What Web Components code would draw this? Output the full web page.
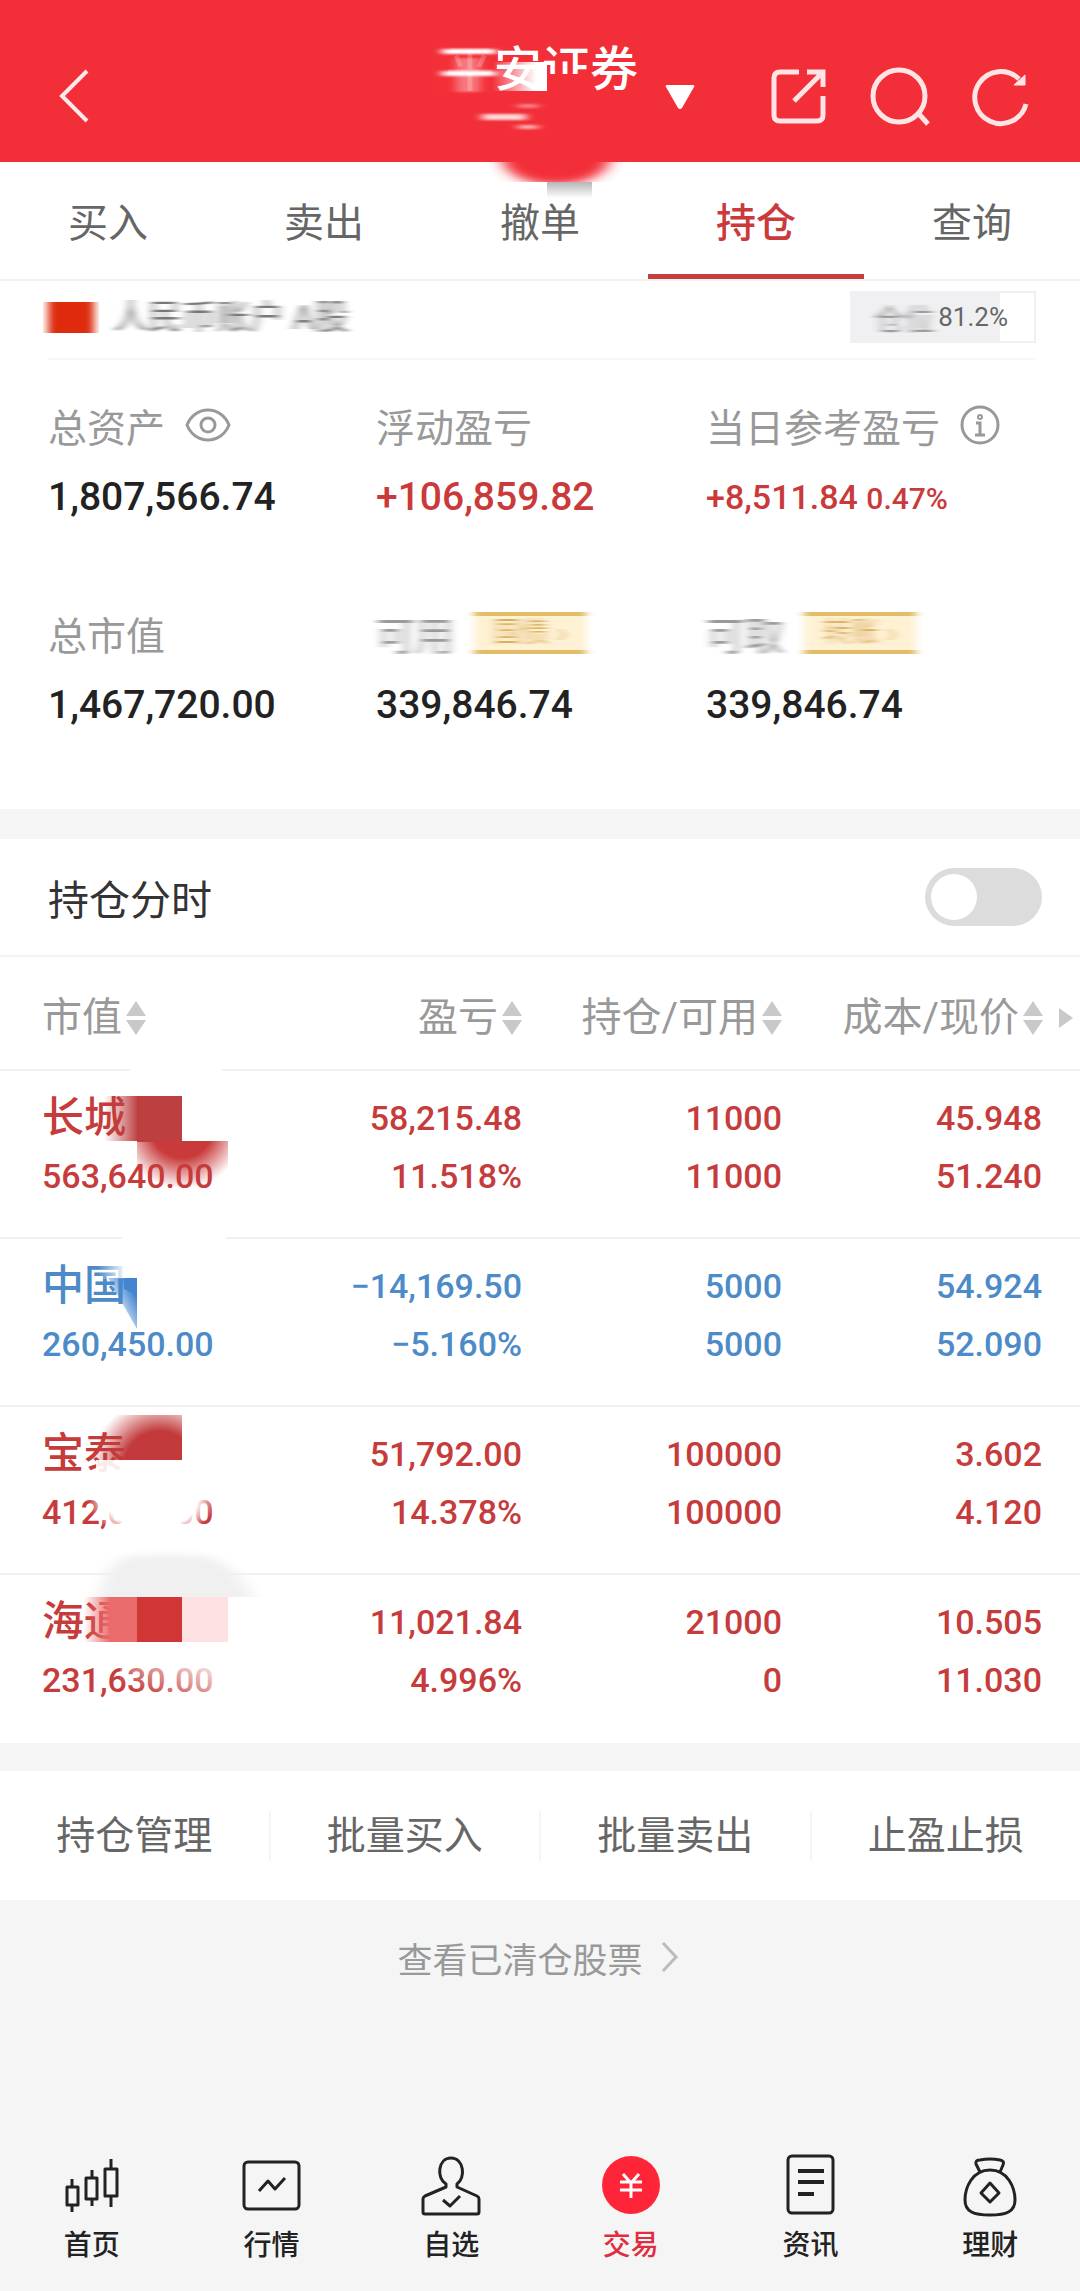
<!DOCTYPE html>
<html lang="zh-CN">
<head>
  <meta charset="UTF-8">
  <meta name="viewport" content="width=device-width, initial-scale=1.0">
  <title>持仓</title>
  <style>
    body {
      margin: 0;
      background: #f5f5f5;
      color: #222;
      font-family: Roboto, "Noto Sans CJK SC", sans-serif;
    }
  </style>
</head>
<body>
  <trade-app></trade-app>

  <script>
    class TradeHeader extends HTMLElement {
      connectedCallback() {
        this.attachShadow({ mode: 'open' });
        this.shadowRoot.innerHTML = `
          <style>
            :host {
              display: block;
              position: relative;
              z-index: 1;
              background: #f22f38;
              color: white;
            }
            header {
              height: 162px;
              display: grid;
              grid-template-columns: 1fr auto 1fr;
              padding: 0 48px 0 52px;
            }
            button {
              border: 0;
              padding: 0;
              background: none;
              color: inherit;
              display: block;
            }
            svg { display: block; }
            .back { justify-self: start; padding-top: 32px; }
            h1 {
              margin: 0;
              padding-top: 38px;
              font-size: 48px;
              line-height: 64px;
              font-weight: 500;
            }
            .right {
              display: flex;
              align-items: center;
              padding: 32px 0 0 26px;
            }
            .icons {
              display: flex;
              gap: 42px;
              margin-left: auto;
            }
            .smear {
              position: absolute;
              left: calc(50% - 120px);
              top: 0;
              overflow: visible;
              pointer-events: none;
            }
          </style>
          <header>
            <button class="back" aria-label="返回">
              <svg width="44" height="130" viewBox="0 0 44 130" fill="none" stroke="#ffe9ea" stroke-width="4">
                <path d="M35 39 L10 64 L35 89"/>
              </svg>
            </button>
            <h1>平安证券</h1>
            <div class="right">
              <button aria-label="切换账户">
                <svg width="32" height="26" viewBox="0 0 32 26"><path d="M3 1H29Q31 1 30 3L18 24Q16 26 14 24L2 3Q1 1 3 1Z" fill="#fff"/></svg>
              </button>
              <div class="icons">
                <button aria-label="分享">
                  <svg width="60" height="60" viewBox="0 0 60 60" fill="none" stroke="#ffe4e5" stroke-width="5">
                    <path d="M31 5H12Q6 5 6 11V48Q6 54 12 54H49Q55 54 55 48V29"/>
                    <path d="M39 5H55V20M54 6L26 34"/>
                  </svg>
                </button>
                <button aria-label="搜索">
                  <svg width="60" height="60" viewBox="0 0 60 60" fill="none" stroke="#ffe4e5" stroke-width="5">
                    <circle cx="29" cy="29" r="26"/>
                    <path d="M48 46L58 57"/>
                  </svg>
                </button>
                <button aria-label="刷新">
                  <svg width="60" height="60" viewBox="0 0 60 60" fill="none" stroke="#ffe4e5" stroke-width="5">
                    <path d="M54 37A26 26 0 1 1 47 12"/>
                    <path d="M53 8V18H42Z" fill="#ffe4e5" stroke-width="1"/>
                  </svg>
                </button>
              </div>
            </div>
          </header>
          <svg class="smear" width="240" height="200" viewBox="0 0 240 200">
            <defs>
              <filter id="soft" x="-20%" y="-50%" width="140%" height="200%"><feGaussianBlur stdDeviation="5 1"/></filter>
              <filter id="round" x="-20%" y="-50%" width="140%" height="200%"><feGaussianBlur stdDeviation="8 4"/></filter>
              <linearGradient id="fade"><stop offset="0" stop-color="#fff" stop-opacity="0"/><stop offset="0.8" stop-color="#fff"/></linearGradient>
              <linearGradient id="grey" x1="0" y1="0" x2="0" y2="1"><stop offset="0" stop-color="#b5b5b5"/><stop offset="1" stop-color="#fff"/></linearGradient>
              <clipPath id="edge"><rect x="40" y="158" width="200" height="24"/></clipPath>
            </defs>
            <rect x="18" y="44" width="54" height="50" fill="#f22f38" opacity="0.8"/>
            <g fill="#fff" filter="url(#soft)">
              <rect x="22" y="49" width="54" height="5"/>
              <rect x="22" y="71" width="54" height="5"/>
              <rect x="36" y="58" width="24" height="34" opacity="0.35"/>
              <rect x="62" y="114" width="44" height="6" opacity="0.8"/>
              <rect x="98" y="104" width="20" height="4" opacity="0.4"/>
              <rect x="98" y="125" width="20" height="4" opacity="0.6"/>
            </g>
            <rect x="72" y="62" width="55" height="29" fill="url(#fade)"/>
            <rect x="127" y="74" width="45" height="26" fill="#f22f38"/>
            <rect x="76" y="91" width="150" height="10" fill="#f22f38"/>
            <g clip-path="url(#edge)"><ellipse cx="136" cy="158" rx="54" ry="27" fill="#f22f38" filter="url(#round)"/></g>
            <rect x="127" y="182" width="45" height="16" fill="url(#grey)"/>
          </svg>
        `;
      }
    }

    class TradeTabs extends HTMLElement {
      connectedCallback() {
        this.attachShadow({ mode: 'open' });
        this.shadowRoot.innerHTML = `
          <style>
            :host {
              display: block;
              background: white;
              border-bottom: 2px solid #f2f2f2;
            }
            nav { display: flex; }
            a {
              flex: 1;
              text-align: center;
              padding-top: 12px;
              font-size: 40px;
              line-height: 100px;
              color: #666;
              text-decoration: none;
              border-bottom: 5px solid transparent;
            }
            a.active {
              color: #ca3a3b;
              border-color: #c43e40;
              font-weight: 500;
            }
          </style>
          <nav>
            <a href="#buy">买入</a>
            <a href="#sell">卖出</a>
            <a href="#cancel">撤单</a>
            <a href="#hold" class="active">持仓</a>
            <a href="#query">查询</a>
          </nav>
        `;
      }
    }

    class AccountSummary extends HTMLElement {
      connectedCallback() {
        this.attachShadow({ mode: 'open' });
        this.shadowRoot.innerHTML = `
          <style>
            :host {
              display: block;
              background: white;
              padding: 4px 44px 66px 48px;
            }
            .defs { position: absolute; }
            .smudge { filter: url(#smudge); }
            .account {
              display: flex;
              align-items: center;
              height: 64px;
              padding-bottom: 9px;
              border-bottom: 2px solid #f7f7f7;
            }
            .flag {
              width: 46px;
              height: 31px;
              background: #de2910;
            }
            .name {
              margin-left: 20px;
              font-size: 34px;
              line-height: 40px;
              color: #777;
            }
            .ratio {
              margin-left: auto;
              display: flex;
              align-items: center;
              gap: 4px;
              box-sizing: border-box;
              height: 52px;
              padding: 0 26px 0 22px;
              font-size: 26px;
              color: #666;
              background: linear-gradient(to left, #fff 34px, #f0f0f2 34px);
              border: 2px solid #f0f0f2;
            }
            .ratio .smudge { font-size: 30px; color: #999; }
            .grid {
              display: grid;
              grid-template-columns: 328fr 330fr 330fr;
              row-gap: 62px;
              padding-top: 31px;
            }
            .label {
              display: flex;
              align-items: center;
              height: 68px;
              font-size: 39px;
              color: #999;
              white-space: nowrap;
            }
            .label button {
              border: 0;
              padding: 0;
              background: none;
              margin-left: 20px;
            }
            .label svg { display: block; }
            .value {
              font-size: 39px;
              line-height: 76px;
              font-weight: 500;
              white-space: nowrap;
            }
            .up { color: #ca3a3b; }
            .day { font-size: 34px; }
            .day small { font-size: 30px; }
            .label .tag {
              box-sizing: border-box;
              height: 42px;
              width: 112px;
              border-top: 4px solid #e2bc66;
              border-bottom: 4px solid #e2bc66;
              background: #fff1d3;
              color: #d9ae55;
              font-size: 28px;
              line-height: 30px;
            }
          </style>
          <svg class="defs" width="0" height="0"><filter id="smudge" x="-10%" width="120%"><feGaussianBlur stdDeviation="4 0"/></filter></svg>
          <div class="account">
            <span class="flag smudge"></span>
            <span class="name smudge">人民币账户 A股</span>
            <span class="ratio"><span class="smudge">仓位</span>81.2%</span>
          </div>
          <div class="grid">
            <div>
              <div class="label">总资产
                <button aria-label="显示或隐藏金额">
                  <svg width="46" height="36" viewBox="0 0 46 36" fill="none" stroke="#999" stroke-width="3">
                    <path d="M2 18C10 -2 36 -2 44 18C36 38 10 38 2 18Z"/>
                    <circle cx="23" cy="18" r="7"/>
                  </svg>
                </button>
              </div>
              <div class="value">1,807,566.74</div>
            </div>
            <div>
              <div class="label">浮动盈亏</div>
              <div class="value up">+106,859.82</div>
            </div>
            <div>
              <div class="label">当日参考盈亏
                <button aria-label="说明">
                  <svg width="40" height="40" viewBox="0 0 40 40" fill="none" stroke="#999" stroke-width="3">
                    <circle cx="20" cy="20" r="18"/>
                    <circle cx="20" cy="12" r="1" stroke-width="4"/>
                    <path d="M16 18H20V29M15 30H25"/>
                  </svg>
                </button>
              </div>
              <div class="value up day">+8,511.84 <small>0.47%</small></div>
            </div>
            <div>
              <div class="label">总市值</div>
              <div class="value">1,467,720.00</div>
            </div>
            <div>
              <div class="label"><span class="smudge">可用</span><button class="tag smudge">国债 ›</button></div>
              <div class="value">339,846.74</div>
            </div>
            <div>
              <div class="label"><span class="smudge">可取</span><button class="tag smudge">转账 ›</button></div>
              <div class="value">339,846.74</div>
            </div>
          </div>
        `;
      }
    }

    class IntradaySwitch extends HTMLElement {
      connectedCallback() {
        this.attachShadow({ mode: 'open' });
        this.shadowRoot.innerHTML = `
          <style>
            :host {
              display: block;
              background: white;
              margin-top: 30px;
              border-bottom: 2px solid #f2f2f2;
            }
            label {
              display: flex;
              align-items: center;
              justify-content: space-between;
              height: 116px;
              padding: 0 38px 0 48px;
              font-size: 41px;
              color: #333;
            }
            input {
              appearance: none;
              margin: 0;
              width: 117px;
              height: 58px;
              padding: 6px;
              box-sizing: border-box;
              border-radius: 29px;
              background: #dcdcdc;
            }
            input::before {
              content: "";
              display: block;
              width: 46px;
              height: 46px;
              border-radius: 50%;
              background: white;
            }
            input:checked { background: #ca3a3b; }
            input:checked::before { margin-left: auto; }
          </style>
          <label>持仓分时 <input type="checkbox" role="switch"></label>
        `;
      }
    }

    const positions = [
      { name: '长城', trend: 'up', cells: ['563,640.00', '58,215.48', '11.518%', '11000', '11000', '45.948', '51.240'] },
      { name: '中国', trend: 'down', cells: ['260,450.00', '−14,169.50', '−5.160%', '5000', '5000', '54.924', '52.090'] },
      { name: '宝泰', trend: 'up', cells: ['412,000.00', '51,792.00', '14.378%', '100000', '100000', '3.602', '4.120'] },
      { name: '海通', trend: 'up', cells: ['231,630.00', '11,021.84', '4.996%', '21000', '0', '10.505', '11.030'] }
    ];

    // masks that hide the rest of each stock name
    const masks = [
      `<linearGradient id="a1"><stop offset="0" stop-color="#bd4041" stop-opacity="0"/><stop offset="1" stop-color="#bd4041"/></linearGradient>
       <radialGradient id="a2" gradientUnits="userSpaceOnUse" cx="182" cy="56" r="62"><stop offset="0.5" stop-color="#c93b3b"/><stop offset="1" stop-color="#c93b3b" stop-opacity="0"/></radialGradient>
       <rect x="130" y="-4" width="92" height="6" fill="#fff"/>
       <rect x="122" y="166" width="104" height="4" fill="#fff"/>
       <rect x="104" y="25" width="34" height="45" fill="url(#a1)"/>
       <rect x="137" y="25" width="45" height="46" fill="#bd4041"/>
       <rect x="137" y="70" width="91" height="46" fill="url(#a2)"/>`,
      `<linearGradient id="b1" gradientUnits="userSpaceOnUse" x1="113" y1="72" x2="137" y2="60"><stop offset="0" stop-color="#4585d0" stop-opacity="0"/><stop offset="1" stop-color="#4585d0"/></linearGradient>
       <linearGradient id="b2"><stop offset="0" stop-color="#fff" stop-opacity="0"/><stop offset="1" stop-color="#fff"/></linearGradient>
       <rect x="98" y="22" width="28" height="18" fill="url(#b2)"/>
       <path d="M108 39H137V90Z" fill="url(#b1)"/>
       <path d="M124 39H137V56L124 50Z" fill="#4585d0"/>`,
      `<radialGradient id="c1" gradientUnits="userSpaceOnUse" cx="160" cy="60" r="72"><stop offset="0.5" stop-color="#c23a3b"/><stop offset="0.95" stop-color="#c23a3b" stop-opacity="0"/></radialGradient>
       <radialGradient id="c2"><stop offset="0.7" stop-color="#fff"/><stop offset="1" stop-color="#fff" stop-opacity="0"/></radialGradient>
       <path d="M128 53H96V64L128 80Z" fill="#fff" opacity="0.9"/>
       <rect x="84" y="8" width="98" height="45" fill="url(#c1)"/>
       <ellipse cx="152" cy="94" rx="64" ry="38" fill="url(#c2)"/>`,
      `<filter id="d0" x="-20%" width="140%"><feGaussianBlur stdDeviation="8 3"/></filter>
       <clipPath id="d1"><rect x="70" y="-30" width="220" height="52"/></clipPath>
       <linearGradient id="d2"><stop offset="0" stop-color="#ea6b6b" stop-opacity="0"/><stop offset="0.5" stop-color="#ea6b6b"/></linearGradient>
       <linearGradient id="d3" x1="0" y1="1" x2="1" y2="0"><stop offset="0.2" stop-color="#fff" stop-opacity="0"/><stop offset="1" stop-color="#fff"/></linearGradient>
       <g clip-path="url(#d1)"><path d="M96 30Q104 -18 136 -20H200Q240 -12 256 30Z" fill="#f0f0f0" filter="url(#d0)"/></g>
       <rect x="84" y="22" width="53" height="45" fill="url(#d2)"/>
       <rect x="137" y="22" width="45" height="45" fill="#d03636"/>
       <rect x="182" y="22" width="46" height="45" fill="#fde1e3"/>
       <rect x="120" y="86" width="100" height="40" fill="url(#d3)"/>`
    ];

    class HoldingsTable extends HTMLElement {
      connectedCallback() {
        const sort = '<svg width="20" height="34" viewBox="0 0 20 34" fill="#c9c9c9"><path d="M10 0L20 15H0ZM0 19H20L10 34Z"/></svg>';
        const head = (text, extra = '') => `<th scope="col"><button>${text}${sort}</button>${extra}</th>`;
        const more = '<svg class="more" width="14" height="20" viewBox="0 0 14 20" fill="#c9c9c9"><path d="M0 0L14 10L0 20Z"/></svg>';
        const rows = positions.map((p, i) => {
          const c = p.cells;
          return `
            <tr class="${p.trend}">
              <td><b>${p.name}</b><span>${c[0]}</span><svg class="mask" width="290" height="168" viewBox="0 0 290 168">${masks[i]}</svg></td>
              <td><span>${c[1]}</span><span>${c[2]}</span></td>
              <td><span>${c[3]}</span><span>${c[4]}</span></td>
              <td><span>${c[5]}</span><span>${c[6]}</span></td>
            </tr>`;
        }).join('');

        this.attachShadow({ mode: 'open' });
        this.shadowRoot.innerHTML = `
          <style>
            :host { display: block; background: white; }
            table {
              width: 100%;
              table-layout: fixed;
              border-collapse: separate;
              border-spacing: 0;
            }
            th, td {
              box-sizing: border-box;
              padding: 0;
              text-align: right;
              white-space: nowrap;
            }
            th {
              height: 114px;
              padding-top: 10px;
              font-weight: 400;
              border-bottom: 2px solid #f0f0f0;
            }
            td {
              height: 168px;
              padding-top: 18px;
              vertical-align: top;
              font-size: 34px;
              font-weight: 500;
              border-bottom: 2px solid #f0f0f0;
            }
            tr:last-child td { border-bottom: 0; }
            th:nth-child(1), td:nth-child(1) { text-align: left; padding-left: 42px; }
            th:nth-child(2), td:nth-child(2) { padding-right: 18px; }
            th:nth-child(3), td:nth-child(3) { padding-right: 28px; }
            td:nth-child(4) { padding-right: 38px; }
            th:nth-child(4) { padding-right: 7px; }
            button {
              border: 0;
              padding: 0;
              background: none;
              font: inherit;
              font-size: 40px;
              line-height: 60px;
              color: #999;
              display: inline-flex;
              align-items: center;
              gap: 4px;
              vertical-align: middle;
            }
            .more { margin-left: 16px; vertical-align: middle; }
            td b, td span { display: block; line-height: 58px; }
            td b { font-size: 42px; font-weight: 500; }
            td:first-child { position: relative; }
            .mask {
              position: absolute;
              left: 0;
              top: 0;
              overflow: visible;
              pointer-events: none;
            }
            .up { color: #c63b3b; }
            .down { color: #4d8bc8; }
          </style>
          <table>
            <thead>
              <tr>${head('市值')}${head('盈亏')}${head('持仓/可用')}${head('成本/现价', more)}</tr>
            </thead>
            <tbody>${rows}</tbody>
          </table>
        `;
      }
    }

    class BatchActions extends HTMLElement {
      connectedCallback() {
        this.attachShadow({ mode: 'open' });
        this.shadowRoot.innerHTML = `
          <style>
            :host { display: block; margin-top: 28px; }
            .actions {
              display: flex;
              align-items: center;
              height: 129px;
              background: white;
            }
            button {
              flex: 1;
              border: 0;
              border-right: 2px solid #f5f5f5;
              padding: 0;
              background: none;
              font: inherit;
              font-size: 39px;
              line-height: 50px;
              color: #666;
            }
            button:last-child { border-right: 0; }
            a {
              display: flex;
              align-items: center;
              justify-content: center;
              gap: 18px;
              height: 114px;
              padding-right: 4px;
              font-size: 35px;
              color: #999;
              text-decoration: none;
            }
          </style>
          <div class="actions">
            <button>持仓管理</button>
            <button>批量买入</button>
            <button>批量卖出</button>
            <button>止盈止损</button>
          </div>
          <a href="#cleared">查看已清仓股票
            <svg width="18" height="32" viewBox="0 0 18 32" fill="none" stroke="#bbb" stroke-width="3"><path d="M2 2L15 16L2 30"/></svg>
          </a>
        `;
      }
    }

    class NavItem extends HTMLElement {
      connectedCallback() {
        this.attachShadow({ mode: 'open' });
        this.shadowRoot.innerHTML = `
          <style>
            :host { display: block; flex: 1; color: #222; }
            :host([active]) { color: #e02d40; }
            a {
              display: flex;
              flex-direction: column;
              align-items: center;
              gap: 12px;
              color: inherit;
              text-decoration: none;
              font-size: 28px;
              line-height: 40px;
              font-weight: 500;
            }
          </style>
          <a href="#"><slot name="icon"></slot><slot></slot></a>
        `;
      }
    }

    class BottomNav extends HTMLElement {
      connectedCallback() {
        this.attachShadow({ mode: 'open' });
        this.shadowRoot.innerHTML = `
          <style>
            :host { display: block; margin-top: auto; }
            nav { display: flex; padding: 0 0 25px 2px; }
            svg {
              display: block;
              width: 64px;
              height: 64px;
              overflow: visible;
              fill: none;
              stroke: #222;
              stroke-width: 3;
              stroke-linejoin: round;
            }
          </style>
          <nav>
            <nav-item>
              <svg slot="icon" viewBox="0 0 64 64">
                <path d="M7 37H18V55H7ZM12 29V37M12 55V62M26 28H37V49H26ZM32 20V28M32 49V56M45 19H57V46H45ZM51 9V19M51 46V57"/>
              </svg>首页
            </nav-item>
            <nav-item>
              <svg slot="icon" viewBox="0 0 64 64">
                <rect x="4" y="12" width="55" height="47" rx="4"/>
                <path d="M19 41L28 31L35 39L45 28"/>
              </svg>行情
            </nav-item>
            <nav-item>
              <svg slot="icon" viewBox="0 0 64 64">
                <path d="M27 37V34C17 28 19 8 32 8S47 28 38 34V37L58 46Q60 47 60 49V62Q60 64 58 64H6Q4 64 4 62V49Q4 47 6 46Z"/>
                <path d="M24 50L31 56L41 46"/>
              </svg>自选
            </nav-item>
            <nav-item active>
              <svg slot="icon" viewBox="0 0 64 64">
                <circle cx="32" cy="35" r="29" fill="#ff2538" stroke="none"/>
                <path d="M24 24L32 33L40 24M21 32H43M21 40H43M32 32V48" stroke="#fff" stroke-width="3"/>
              </svg>交易
            </nav-item>
            <nav-item>
              <svg slot="icon" viewBox="0 0 64 64">
                <rect x="9" y="6" width="45" height="57" rx="4"/>
                <path d="M19 21H45M19 32H45M19 44H35" stroke-width="4"/>
              </svg>资讯
            </nav-item>
            <nav-item>
              <svg slot="icon" viewBox="0 0 64 64">
                <path d="M22 22L18 14Q17 10 22 10Q32 8 42 10Q47 11 45 15L42 22"/>
                <path d="M32 20C14 20 7 38 7 50C7 62 16 65 32 65S57 62 57 50C57 38 50 20 32 20Z"/>
                <path d="M32 33L41 43L32 52L23 43Z"/>
              </svg>理财
            </nav-item>
          </nav>
        `;
      }
    }

    class TradeApp extends HTMLElement {
      connectedCallback() {
        this.attachShadow({ mode: 'open' });
        this.shadowRoot.innerHTML = `
          <style>
            :host {
              display: flex;
              flex-direction: column;
              min-height: 100vh;
            }
          </style>
          <trade-header></trade-header>
          <trade-tabs></trade-tabs>
          <account-summary></account-summary>
          <intraday-switch></intraday-switch>
          <holdings-table></holdings-table>
          <batch-actions></batch-actions>
          <bottom-nav></bottom-nav>
        `;
      }
    }

    customElements.define('trade-header', TradeHeader);
    customElements.define('trade-tabs', TradeTabs);
    customElements.define('account-summary', AccountSummary);
    customElements.define('intraday-switch', IntradaySwitch);
    customElements.define('holdings-table', HoldingsTable);
    customElements.define('batch-actions', BatchActions);
    customElements.define('nav-item', NavItem);
    customElements.define('bottom-nav', BottomNav);
    customElements.define('trade-app', TradeApp);
  </script>
</body>
</html>
